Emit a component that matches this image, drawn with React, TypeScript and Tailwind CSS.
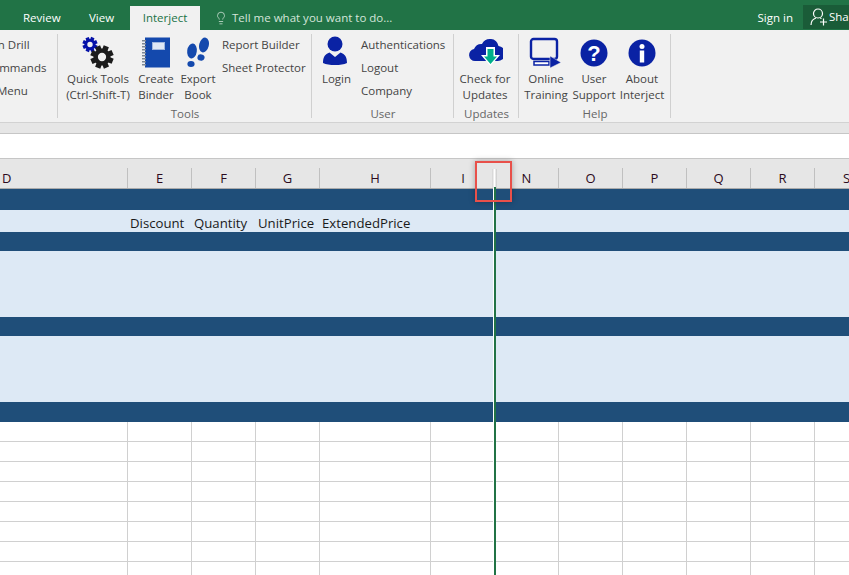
import { Lightbulb } from "lucide-react";

const BLUE = "#0a22a4";
const BOOK = "#1449ad";

function Gear({ cx, cy, r, color }: { cx: number; cy: number; r: number; color: string }) {
    const teeth = [0, 45, 90, 135, 180, 225, 270, 315];
    return (
        <g>
            {teeth.map((a) => (
                <rect key={a} x={cx - r * 0.24} y={cy - r} width={r * 0.48} height={r * 0.5} fill={color} transform={`rotate(${a + 22} ${cx} ${cy})`} />
            ))}
            <circle cx={cx} cy={cy} r={r * 0.55} fill="none" stroke={color} strokeWidth={r * 0.38} />
        </g>
    );
}

function GearsIcon() {
    return (
        <svg width="34" height="34" viewBox="0 0 34 34">
            <Gear cx={9} cy={8.5} r={7.5} color="#0511a8" />
            <Gear cx={21} cy={21} r={11.5} color="#1c1c1c" />
        </svg>
    );
}

function BinderIcon() {
    return (
        <svg width="28" height="31" viewBox="0 0 28 31">
            <rect x="3" y="0.500" width="25" height="30" fill={BOOK} />
            <rect x="10.500" y="5.500" width="12" height="7" fill="#dfe8f5" stroke="#9fb6dd" />
            {[3, 6, 9, 12, 15, 18, 21, 24, 27].map((y) => (
                <rect key={y} x="0" y={y} width="4" height="1.500" fill="#7d8794" />
            ))}
        </svg>
    );
}

function FootIcon() {
    return (
        <svg width="26" height="32" viewBox="0 0 26 32">
            <g fill={BOOK}>
                <ellipse cx="7" cy="14" rx="4.800" ry="7.500" transform="rotate(8 7 14)" />
                <ellipse cx="6" cy="27" rx="3.600" ry="3" />
                <ellipse cx="19" cy="8" rx="4.800" ry="7.500" transform="rotate(14 19 8)" />
                <ellipse cx="16" cy="20.500" rx="3.600" ry="3.200" transform="rotate(14 16 20.500)" />
            </g>
        </svg>
    );
}

function PersonIcon() {
    return (
        <svg className="mr-[4px] mb-[3px]" width="26" height="30" viewBox="0 0 26 30">
            <circle cx="13" cy="8" r="7.500" fill={BLUE} />
            <path d="M1 27c0-6 2-9 6.500-10.500L13 21l5.500-4.500C23 18 25 21 25 27c-3 1.500-7 2-12 2s-9-.5-12-2z" fill={BLUE} />
        </svg>
    );
}

function CloudIcon() {
    return (
        <svg width="36" height="30" viewBox="0 0 36 30">
            <path d="M8 23a6 6 0 0 1-1-11.900A8 8 0 0 1 15 6a9 9 0 0 1 9-5 8 8 0 0 1 7.500 7A7.500 7.500 0 0 1 30 23z" fill={BLUE} />
            <path d="M19 9h9v8h5l-9.500 11L14 17h5z" fill="#ffffff" />
            <path d="M20.500 11h6v7.500h3.500l-6.500 7.500-6.500-7.500h3.500z" fill="#00b08a" />
        </svg>
    );
}

function MonitorIcon() {
    return (
        <svg width="34" height="32" viewBox="0 0 34 32">
            <rect x="2" y="2" width="26" height="20" rx="2.500" fill="none" stroke={BLUE} strokeWidth="2.400" />
            <rect x="5" y="24.500" width="15" height="3.500" fill="#fff" stroke={BLUE} strokeWidth="1.500" />
            <path d="M21 19l11 6.500L21 31z" fill={BLUE} stroke="#f1f1f1" strokeWidth="0.500" />
        </svg>
    );
}

function QuestionIcon() {
    return (
        <svg width="28" height="28" viewBox="0 0 28 28">
            <circle cx="14" cy="14" r="13.500" fill={BLUE} />
            <text x="14" y="22" textAnchor="middle" fontSize="22" fontWeight="700" fill="#fff" fontFamily="Liberation Sans, sans-serif">?</text>
        </svg>
    );
}

function InfoIcon() {
    return (
        <svg width="28" height="28" viewBox="0 0 28 28">
            <circle cx="14" cy="14" r="13.500" fill={BLUE} />
            <circle cx="14" cy="7.500" r="2.500" fill="#fff" />
            <rect x="11.800" y="11.500" width="4.400" height="12" fill="#fff" />
        </svg>
    );
}

function ShareIcon() {
    return (
        <svg className="shrink-0" width="18" height="18" viewBox="0 0 18 18" fill="none" stroke="#fff" strokeWidth="1.200">
            <circle cx="8" cy="5.500" r="4.500" />
            <path d="M1 17c0-4 2-6 5-7M10 10l1.500.5" />
            <path d="M13.500 10.500v7M10 14h7" />
        </svg>
    );
}

function BigBtn({ icon, lines, w }: { icon: React.ReactNode; lines: string[]; w: string }) {
    return (
        <div className={`flex flex-col items-center ${w}`}>
            <div className="h-[37px] flex items-center justify-center">{icon}</div>
            {lines.map((t) => (
                <div key={t} className="h-4 leading-4 whitespace-nowrap">{t}</div>
            ))}
        </div>
    );
}

function SmallCol({ items }: { items: string[] }) {
    return (
        <div className="flex flex-col gap-[7px] pt-[3px]">
            {items.map((t) => (
                <div key={t} className="h-4 leading-4 whitespace-nowrap">{t}</div>
            ))}
        </div>
    );
}

function Group({ w, label, children }: { w: string; label?: string; children: React.ReactNode }) {
    return (
        <div className={`relative shrink-0 overflow-hidden ${w} h-full`}>
            <div className="flex h-[76px] pt-[4px]">{children}</div>
            {label && <div className="h-4 leading-4 text-center text-[#666]">{label}</div>}
            <div className="absolute right-0 top-[4px] bottom-[4px] w-px bg-[#d0d0d0]" />
        </div>
    );
}

const columns = [
    { name: "D", w: "w-[128px]", cls: "justify-start pl-0.5" },
    { name: "E", w: "w-[64px]", cls: "justify-center" },
    { name: "F", w: "w-[64px]", cls: "justify-center" },
    { name: "G", w: "w-[64px]", cls: "justify-center" },
    { name: "H", w: "w-[111px]", cls: "justify-center" },
    { name: "I", w: "w-[64px]", cls: "justify-center border-r-0" },
    { name: "N", w: "w-[64px]", cls: "justify-center" },
    { name: "O", w: "w-[64px]", cls: "justify-center" },
    { name: "P", w: "w-[64px]", cls: "justify-center" },
    { name: "Q", w: "w-[64px]", cls: "justify-center" },
    { name: "R", w: "w-[64px]", cls: "justify-center" },
    { name: "S", w: "w-[64px]", cls: "justify-center" },
];

const emptyRows = [0, 1, 2, 3, 4, 5, 6, 7];

export default function App() {
    return (
        <div className="relative w-[849px] h-[575px] overflow-hidden bg-white text-[11.5px] text-[#444] font-['Open_Sans',sans-serif]">
            {/* tab strip */}
            <div className="h-[30px] bg-[#217346] flex items-end text-white">
                <div className="w-[23px]" />
                <div className="h-6 leading-6 w-[66px]">Review</div>
                <div className="h-6 leading-6 w-[41px]">View</div>
                <div className="h-6 leading-6 w-[70px] bg-[#f1f1f1] text-[#217346] text-center">Interject</div>
                <div className="h-6 flex items-center pl-[14px] gap-[4px] text-[#d4e5da]">
                    <Lightbulb size={14} strokeWidth={1.3} />
                    <span>Tell me what you want to do...</span>
                </div>
                <div className="ml-auto h-6 leading-6 mr-[10px]">Sign in</div>
                <div className="h-6 mb-px w-[46px] pl-[7px] bg-[#1a5c38] flex items-center gap-[1px] overflow-hidden">
                    <ShareIcon />
                    <span>Share</span>
                </div>
            </div>

            {/* ribbon */}
            <div className="h-[93px] bg-[#f1f1f1] border-b border-[#d2d2d2] flex">
                <Group w="w-[58px]">
                    <div className="flex flex-col gap-[7px] pt-[3px]">
                        <div className="h-4 leading-4 whitespace-nowrap ml-[-37px]">Column Drill</div>
                        <div className="h-4 leading-4 whitespace-nowrap ml-[-15px]">Commands</div>
                        <div className="h-4 leading-4 whitespace-nowrap ml-[-3px]">Menu</div>
                    </div>
                </Group>
                <Group w="w-[254px]" label="Tools">
                    <BigBtn w="w-[80px]" icon={<GearsIcon />} lines={["Quick Tools", "(Ctrl-Shift-T)"]} />
                    <BigBtn w="w-[36px]" icon={<BinderIcon />} lines={["Create", "Binder"]} />
                    <BigBtn w="w-[48px]" icon={<FootIcon />} lines={["Export", "Book"]} />
                    <SmallCol items={["Report Builder", "Sheet Protector"]} />
                </Group>
                <Group w="w-[142px]" label="User">
                    <BigBtn w="w-[49px]" icon={<PersonIcon />} lines={["Login"]} />
                    <SmallCol items={["Authentications", "Logout", "Company"]} />
                </Group>
                <Group w="w-[65px]" label="Updates">
                    <BigBtn w="w-[62px]" icon={<CloudIcon />} lines={["Check for", "Updates"]} />
                </Group>
                <Group w="w-[152px]" label="Help">
                    <BigBtn w="w-[54px]" icon={<MonitorIcon />} lines={["Online", "Training"]} />
                    <BigBtn w="w-[42px]" icon={<QuestionIcon />} lines={["User", "Support"]} />
                    <BigBtn w="w-[54px]" icon={<InfoIcon />} lines={["About", "Interject"]} />
                </Group>
            </div>

            {/* formula bar */}
            <div className="h-[11px] bg-[#e6e6e6] border-b border-[#c6c6c6]" />
            <div className="h-[25px] bg-white border-b border-[#c6c6c6]" />

            {/* column headers */}
            <div className="h-[30px] bg-[#e6e6e6] border-b border-[#ababab] flex items-end text-[13px] text-[#2b0a20]">
                {columns.map((c) => (
                    <div key={c.name} className={`shrink-0 h-5 pt-px flex items-center border-r border-[#c0c0c0] ${c.w} ${c.cls}`}>
                        {c.name}
                    </div>
                ))}
            </div>

            {/* banded rows */}
            <div className="h-[21px] bg-[#1f4e79]" />
            <div className="h-[22px] bg-[#dde9f5] flex text-[13.2px] text-[#1a1a1a]">
                <div className="w-[130px]" />
                <div className="w-[64px] leading-[26px]">Discount</div>
                <div className="w-[64px] leading-[26px]">Quantity</div>
                <div className="w-[64px] leading-[26px]">UnitPrice</div>
                <div className="leading-[26px]">ExtendedPrice</div>
            </div>
            <div className="h-[19px] bg-[#1f4e79]" />
            <div className="h-[66px] bg-[#dde9f5]" />
            <div className="h-[19px] bg-[#1f4e79]" />
            <div className="h-[66px] bg-[#dde9f5]" />
            <div className="h-[20px] bg-[#1f4e79]" />

            {/* empty grid */}
            {emptyRows.map((r) => (
                <div key={r} className="h-5 flex border-b border-[#d0d0d0]">
                    {columns.map((c) => (
                        <div key={c.name} className={`shrink-0 h-full border-r border-[#d0d0d0] ${c.w} ${c.name === "I" ? "border-r-0" : ""}`} />
                    ))}
                </div>
            ))}

            {/* column resize guide */}
            <div className="absolute left-[492px] top-[169px] w-[5px] h-[19px] bg-gradient-to-r from-[#d0d0d0] via-white to-[#c8c8c8]" />
            <div className="absolute left-[493px] top-[188px] bottom-0 w-px bg-white" />
            <div className="absolute left-[494px] top-[187px] bottom-0 w-[2px] bg-[#217346]" />

            {/* callout */}
            <div className="absolute left-[475px] top-[161px] w-[37px] h-[41px] border-2 border-[#e8504a] shadow-[0_0_6px_rgba(0,0,0,0.3)]" />
        </div>
    );
}
